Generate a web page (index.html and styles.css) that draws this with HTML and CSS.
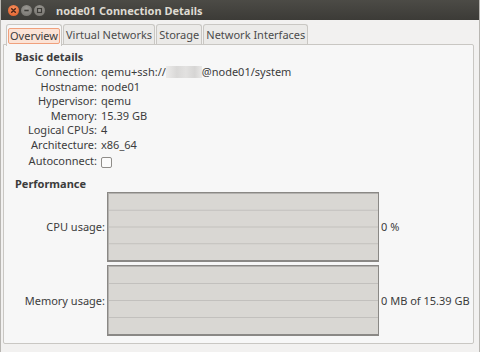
FILE: index.html
```html
<!DOCTYPE html>
<html lang="en">
<head>
    <meta charset="UTF-8">
    <title>node01 Connection Details</title>
    <link rel="stylesheet" href="styles.css">
</head>
<body>
<div class="window">
    <div class="titlebar">
        <div class="win-buttons">
            <span class="win-btn close">
                <svg width="11" height="11" viewBox="0 0 11 11"><path d="M3.7 3.7 L7.3 7.3 M7.3 3.7 L3.7 7.3" stroke="#4a2418" stroke-width="1.5" stroke-linecap="round"/></svg>
            </span>
            <span class="win-btn">
                <svg width="11" height="11" viewBox="0 0 11 11"><path d="M3.3 5.5 H7.7" stroke="#3c3b37" stroke-width="1.6"/></svg>
            </span>
            <span class="win-btn">
                <svg width="11" height="11" viewBox="0 0 11 11"><rect x="3.5" y="3.5" width="4" height="4" fill="none" stroke="#3c3b37" stroke-width="1.2"/></svg>
            </span>
        </div>
        <div class="title">node01 Connection Details</div>
    </div>

    <div class="content">
        <div class="tabs">
            <div class="tab active"><span class="focus">Overview</span></div>
            <div class="tab">Virtual Networks</div>
            <div class="tab">Storage</div>
            <div class="tab">Network Interfaces</div>
        </div>

        <div class="page">
            <div class="section-title">Basic details</div>
            <div class="details">
                <div class="label">Connection:</div>
                <div class="value">qemu+ssh://<span class="redacted"></span>@node01/system</div>
                <div class="label">Hostname:</div>
                <div class="value">node01</div>
                <div class="label">Hypervisor:</div>
                <div class="value">qemu</div>
                <div class="label">Memory:</div>
                <div class="value">15.39 GB</div>
                <div class="label">Logical CPUs:</div>
                <div class="value">4</div>
                <div class="label">Architecture:</div>
                <div class="value">x86_64</div>
                <div class="label tall">Autoconnect:</div>
                <div class="value tall"><span class="checkbox"></span></div>
            </div>

            <div class="section-title perf-title">Performance</div>
            <div class="perf">
                <div class="perf-label">CPU usage:</div>
                <div class="graph cpu"></div>
                <div class="perf-value">0 %</div>
                <div class="perf-label">Memory usage:</div>
                <div class="graph mem"></div>
                <div class="perf-value">0 MB of 15.39 GB</div>
            </div>
        </div>
    </div>
</div>
</body>
</html>
```

FILE: styles.css
```css
body {
    margin: 0;
    font-family: "Noto Sans", "DejaVu Sans", sans-serif;
    font-size: 11px;
    color: #3c3c3c;
    background: #f2f1f0;
}

.window {
    width: 480px;
    height: 352px;
    display: flex;
    flex-direction: column;
    background: #f2f1f0;
    box-sizing: border-box;
    border-left: 1px solid #b8b6b2;
    border-right: 1px solid #b8b6b2;
}

.titlebar {
    height: 20px;
    display: flex;
    align-items: center;
    background: linear-gradient(#4c4b46, #3c3b37);
    padding-left: 7px;
}

.win-buttons {
    display: flex;
    gap: 2px;
}

.win-btn {
    width: 11px;
    height: 11px;
    border-radius: 50%;
    background: radial-gradient(circle at 50% 35%, #9d9b96, #6f6d68);
    display: flex;
}

.win-btn.close {
    background: radial-gradient(circle at 50% 35%, #f7915f, #de5a26);
}

.title {
    margin-left: 11px;
    font-weight: bold;
    font-size: 11px;
    color: #dfdbd2;
}

.content {
    flex: 1;
    display: flex;
    flex-direction: column;
    padding: 4px 5px 8px 2px;
}

.tabs {
    display: flex;
    padding-left: 3px;
    gap: 1px;
    height: 20px;
    position: relative;
    z-index: 1;
}

.tab {
    border: 1px solid #c9c7c3;
    border-bottom: none;
    border-radius: 3px 3px 0 0;
    background: #ebeae8;
    padding: 0 2px;
    display: flex;
    align-items: center;
    color: #4c4c4c;
}

.tab.active {
    background: #f7f7f7;
    padding: 0 1px;
    height: 21px;
}

.tab .focus {
    border: 1px solid #f0a07c;
    border-radius: 2px;
    background: #fbe3d6;
    padding: 0 1px;
    line-height: 14px;
    color: #3c3c3c;
}

.page {
    flex: 1;
    border: 1px solid #c9c7c3;
    border-radius: 0 2px 2px 2px;
    background: #f7f7f7;
    padding: 5px 11px 0 11px;
}

.section-title {
    font-weight: bold;
    line-height: 14px;
    color: #3c3c3c;
}

.details {
    display: grid;
    grid-template-columns: 82px 1fr;
    column-gap: 4px;
    grid-auto-rows: 14.5px;
    margin-top: 1px;
}

.label {
    text-align: right;
    line-height: 14.5px;
    white-space: nowrap;
}

.value {
    line-height: 14.5px;
    display: flex;
    align-items: center;
    white-space: nowrap;
}

.label.tall, .value.tall {
    line-height: 18px;
    height: 18px;
}

.redacted {
    display: inline-block;
    width: 36px;
    height: 12px;
    background: linear-gradient(90deg, #ecebea, #d9d8d7 30%, #e2e1e0 55%, #d6d5d4 80%, #e9e8e7);
}

.checkbox {
    width: 9px;
    height: 9px;
    border: 1px solid #8f8d89;
    border-radius: 2px;
    background: #fbfbfb;
    margin-top: 2px;
}

.perf-title {
    margin-top: 10px;
}

.perf {
    display: grid;
    grid-template-columns: 90px 274px 1fr;
    grid-template-rows: 70px 71px;
    row-gap: 3px;
    margin-top: 1px;
}

.perf-label {
    text-align: right;
    align-self: center;
    white-space: nowrap;
}

.perf-value {
    align-self: center;
    padding-left: 2px;
    white-space: nowrap;
}

.graph {
    box-sizing: border-box;
    border: 1px solid #8a8885;
    border-bottom-width: 2px;
    box-shadow: inset 1px 1px 0 #b3b1ae;
    background-color: #d9d7d3;
    background-image: linear-gradient(#c2c0bd 1px, transparent 1px);
    background-size: 100% 25%;
    margin-left: 2px;
}
```
